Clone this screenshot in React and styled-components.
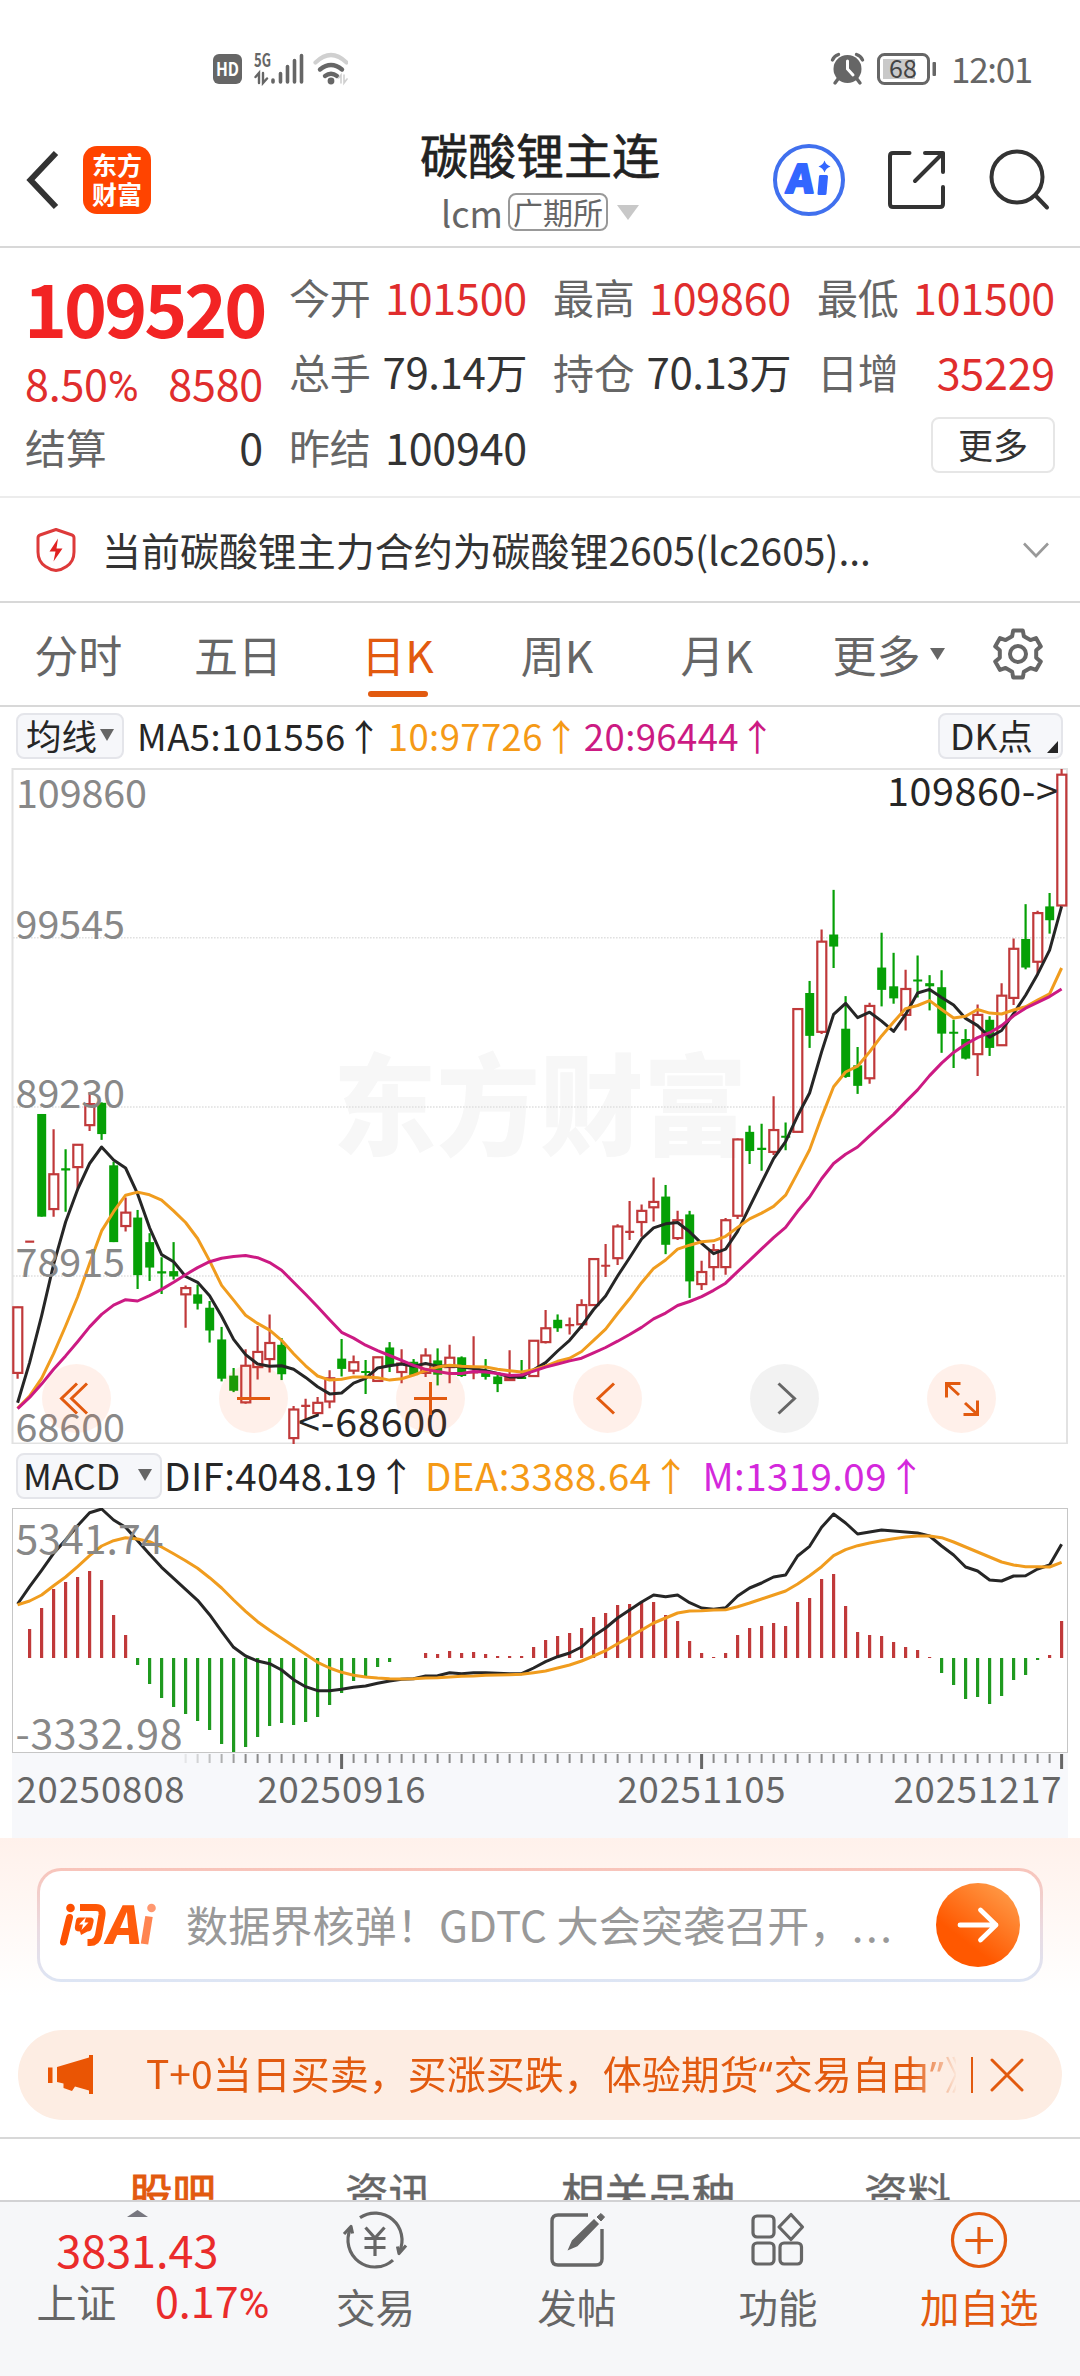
import React from "react";
import styled, { createGlobalStyle } from "styled-components";

const FONT = '"Noto Sans CJK SC", "Noto Sans", sans-serif';
const C = {
  ink: "#262626",
  text: "#333333",
  mute: "#666666",
  faint: "#888888",
  red: "#e02d2d",
  orange: "#e25a0f",
  up: "#c0393a",
  down: "#06a006",
  ma10: "#f59a16",
  ma20: "#cc1a83",
  macd: "#d428dc",
};

const Global = createGlobalStyle`
  * { box-sizing: border-box; }
  body { margin: 0; background: #fff; font-family: ${FONT}; color: ${C.text}; }
  svg { display: block; flex: none; }
`;

const Screen = styled.div`
  width: 1080px;
  height: 2376px;
  display: flex;
  flex-direction: column;
  overflow: hidden;
  background: #fff;
`;

/* ---------- status bar ---------- */
const StatusBar = styled.div`
  height: 113px;
  padding: 46px 50px 0 212px;
  display: flex;
  align-items: flex-start;
  justify-content: space-between;
`;
const StatusGroup = styled.div`
  display: flex;
  align-items: center;
  height: 46px;
`;
const Clock = styled.span`
  margin-left: 13px;
  font-size: 35px;
  line-height: 46px;
  padding-bottom: 3px;
  letter-spacing: -1.3px;
  color: ${C.mute};
  width: 79px;
  white-space: nowrap;
`;

/* ---------- header ---------- */
const Header = styled.header`
  height: 135px;
  border-bottom: 2px solid #d8d8d8;
  display: grid;
  grid-template-columns: 340px 1fr 340px;
  align-items: center;
`;
const HeaderSide = styled.div`
  display: flex;
  align-items: center;
  gap: ${(p) => p.$gap}px;
  padding-left: ${(p) => p.$pad}px;
`;
const Logo = styled.div`
  width: 68px;
  height: 68px;
  border-radius: 14px;
  background: #ff4400;
  color: #fff;
  font-size: 25px;
  font-weight: 700;
  line-height: 29px;
  text-align: center;
  padding-top: 4px;
`;
const TitleBlock = styled.div`
  display: flex;
  flex-direction: column;
  align-items: center;
  height: 133px;
  padding-top: 12px;
`;
const Title = styled.div`
  font-size: 48px;
  line-height: 56px;
  -webkit-text-stroke: 0.6px #222;
  color: #222;
`;
const SubTitle = styled.div`
  display: flex;
  align-items: center;
  height: 40px;
  margin-top: 11px;
  font-size: 36px;
  color: ${C.mute};
  line-height: 40px;
`;
const Exchange = styled.span`
  height: 38px;
  margin: 0 9px 0 5px;
  padding: 0 3px;
  border: 2px solid #999;
  border-radius: 8px;
  font-size: 30px;
  line-height: 33px;
`;

/* ---------- quote ---------- */
const Quote = styled.section`
  height: 250px;
  padding: 10px 24px 0 25px;
  border-bottom: 2px solid #ececec;
  display: grid;
  grid-template-columns: repeat(4, 238px);
  column-gap: 26px;
  align-items: start;
`;
const QuoteColumn = styled.div`
  display: flex;
  flex-direction: column;
`;
const LastPrice = styled.div`
  height: 97px;
  line-height: 97px;
  font-size: 73px;
  font-weight: 700;
  letter-spacing: -3px;
  margin-left: -1px;
  color: #f22424;
  white-space: nowrap;
`;
const Cell = styled.div`
  height: ${(p) => p.$h || 75}px;
  display: flex;
  align-items: center;
  justify-content: space-between;
  font-size: 43px;
  letter-spacing: -0.2px;
  white-space: nowrap;
  color: ${(p) => (p.$up ? C.red : C.text)};
`;
const Percent = styled.span`
  font-family: Roboto, sans-serif;
  font-size: 0.98em;
  line-height: 1;
`;
const Label = styled.span`
  font-size: 41px;
  color: ${C.mute};
`;
const Volume = styled.span`
  font-size: 42px;
  letter-spacing: -0.4px;
`;
const MoreButton = styled.button`
  align-self: flex-end;
  margin-top: 9px;
  width: 124px;
  height: 56px;
  padding: 0 0 3px;
  border: 2px solid #e6e6e6;
  border-radius: 8px;
  background: #fff;
  font-family: ${FONT};
  font-size: 35px;
  line-height: 48px;
  color: ${C.text};
`;

/* ---------- notice ---------- */
const Notice = styled.section`
  height: 105px;
  padding: 0 30px 0 35px;
  border-bottom: 2px solid #d8d8d8;
  display: flex;
  align-items: center;
`;
const NoticeText = styled.div`
  flex: 1;
  margin-left: 25px;
  padding-bottom: 2px;
  font-size: 39px;
  letter-spacing: -0.04px;
  line-height: 60px;
`;

/* ---------- period tabs ---------- */
const Periods = styled.nav`
  height: 104px;
  border-bottom: 2px solid #d8d8d8;
  display: flex;
  align-items: center;
`;
const Period = styled.div`
  width: ${(p) => p.$w || 159.6}px;
  height: 102px;
  padding-right: ${(p) => (p.$w ? 0 : 3)}px;
  display: flex;
  align-items: center;
  justify-content: center;
  gap: 10px;
  position: relative;
  font-size: 44px;
  line-height: 102px;
  white-space: nowrap;
  color: ${(p) => (p.$on ? C.orange : C.mute)};
  &::after {
    content: "";
    display: ${(p) => (p.$on ? "block" : "none")};
    position: absolute;
    left: 49px;
    bottom: 8px;
    width: 60px;
    height: 6px;
    border-radius: 3px;
    background: ${C.orange};
  }
`;

/* ---------- indicator rows ---------- */
const IndicatorRow = styled.div`
  height: ${(p) => p.$h}px;
  padding: ${(p) => p.$top}px 17px 0 16px;
  display: flex;
  align-items: flex-start;
`;
const Picker = styled.div`
  width: ${(p) => p.$w}px;
  height: 46px;
  border: 2px solid #e4e5ea;
  border-radius: 8px;
  background: #f6f7fa;
  display: flex;
  align-items: center;
  justify-content: space-between;
  padding: 0 8px 2px ${(p) => p.$pl || 8}px;
  font-size: 35.5px;
  line-height: 42px;
  color: ${C.ink};
  white-space: nowrap;
`;
const Reading = styled.span`
  margin-left: ${(p) => p.$ml}px;
  font-size: ${(p) => p.$size}px;
  letter-spacing: ${(p) => p.$ls || 0}px;
  line-height: ${(p) => p.$lh || 44}px;
  white-space: pre;
  color: ${(p) => p.$color};
`;
const Spacer = styled.div`
  flex: 1;
`;
const Corner = styled.i`
  align-self: flex-end;
  width: 11px;
  height: 12px;
  margin: 0 -5px 2px 0;
  background: ${C.ink};
  clip-path: polygon(100% 0, 100% 100%, 0 100%);
`;

/* ---------- charts ---------- */
const ChartWrap = styled.div`
  position: relative;
  height: ${(p) => p.$h}px;
`;
const ChartControls = styled.div`
  position: absolute;
  left: 42px;
  bottom: 11px;
  display: flex;
  gap: 108px;
`;
const RoundControl = styled.div`
  width: 69px;
  height: 69px;
  border-radius: 50%;
  background: ${(p) => (p.$off ? "rgba(110,110,110,.09)" : "rgba(255,100,30,.095)")};
`;

/* ---------- AI prompt ---------- */
const AskSection = styled.section`
  height: 172px;
  padding: 30px 37px 0;
  background: linear-gradient(#fff1eb, #fff 92%);
`;
const AskBox = styled.div`
  height: 114px;
  border: 3px solid transparent;
  border-radius: 24px;
  background: linear-gradient(#fff, #fff) padding-box,
    linear-gradient(#f8c4ba, #eadbe2 55%, #dde5f4) border-box;
  display: flex;
  align-items: center;
  padding: 0 20px 0 18px;
`;
const AskText = styled.div`
  flex: 1;
  margin-left: 30px;
  font-size: 42px;
  letter-spacing: 0.15px;
  line-height: 60px;
  padding-bottom: 3px;
  color: #999;
  white-space: pre;
`;
const Dots = styled.span`
  letter-spacing: 2.6px;
`;

/* ---------- ticker ---------- */
const Ticker = styled.section`
  margin: 20px 18px 17px;
  height: 90px;
  border-radius: 45px;
  background: #fdede3;
  display: flex;
  align-items: center;
  padding: 0 38px 0 30px;
  color: ${C.orange};
`;
const TickerText = styled.div`
  width: 812px;
  margin-left: 52px;
  font-size: 39px;
  line-height: 60px;
  padding-bottom: 4px;
  white-space: nowrap;
  overflow: hidden;
  mask-image: linear-gradient(90deg, #000 765px, rgba(0, 0, 0, 0.3) 800px, transparent 812px);
`;
const Curly = styled.span`
  font-family: "Noto Sans", sans-serif;
  letter-spacing: 1px;
`;
const Bar = styled.i`
  width: 2px;
  height: 36px;
  margin: 0 17px 0 15px;
  background: ${C.orange};
`;

/* ---------- section tabs ---------- */
const Sections = styled.nav`
  height: 63px;
  border-top: 2px solid #d8d8d8;
  padding-top: 28px;
  display: flex;
  justify-content: space-evenly;
  align-items: flex-start;
  overflow: hidden;
`;
const SectionTab = styled.div`
  font-size: 43.5px;
  -webkit-text-stroke: ${(p) => (p.$on ? 1 : 0.4)}px currentColor;
  line-height: 50px;
  color: ${(p) => (p.$on ? C.orange : C.mute)};
`;

/* ---------- bottom bar ---------- */
const BottomBar = styled.footer`
  height: 176px;
  border-top: 2px solid #d2d2d4;
  background: #f6f7f9;
  display: flex;
`;
const IndexBlock = styled.div`
  width: 275px;
  padding-top: 8px;
  display: flex;
  flex-direction: column;
  align-items: center;
`;
const IndexValue = styled.div`
  margin-top: 5px;
  font-size: 45px;
  line-height: 54px;
  color: #ea2b2b;
`;
const IndexRow = styled.div`
  width: 233px;
  margin-left: 31px;
  display: flex;
  justify-content: space-between;
  align-items: center;
  font-size: 43px;
  line-height: 46px;
  color: #ea2b2b;
`;
const IndexName = styled.span`
  font-size: 40px;
  letter-spacing: 0;
  color: ${C.mute};
`;
const NavItem = styled.div`
  width: 201.5px;
  padding-top: 8px;
  display: flex;
  flex-direction: column;
  align-items: center;
  font-size: 39.5px;
  line-height: 72px;
  color: ${(p) => (p.$accent ? C.orange : C.mute)};
`;

/* ---------- small drawings ---------- */
const Triangle = ({ w, h, color, flip }) => (
  <svg width={w} height={h} viewBox="0 0 10 10" preserveAspectRatio="none">
    <path d={flip ? "M0 10L5 0L10 10Z" : "M0 0H10L5 10Z"} fill={color} />
  </svg>
);

const SignalIcons = () => (
  <svg width="136" height="34" viewBox="212 52 136 34">
    <rect x="213" y="54" width="29" height="30" rx="6" fill={C.mute} />
    <text x="227.5" y="76" fontSize="18" fontWeight="700" textAnchor="middle" textLength="23" lengthAdjust="spacingAndGlyphs" fill="#fff" fontFamily={FONT}>HD</text>
    <text x="254" y="67" fontSize="18.5" fontWeight="700" textLength="17" lengthAdjust="spacingAndGlyphs" fill={C.mute} fontFamily={FONT}>5G</text>
    <g stroke={C.mute} fill="none" strokeLinecap="round">
      <path d="M259 83V73L255.500 77M263 73V83L267 78.500" strokeWidth="2.400" />
      <path d="M273 82V80M280.500 82V73.500M287.500 82V66.500M294.500 82V60.500M301.500 82V55.500" strokeWidth="3.600" />
      <path d="M320 69.500Q331 60.500 342 69.500" strokeWidth="4.400" />
      <path d="M325 76Q331 71.500 337 76" strokeWidth="4.400" />
      <path d="M315.500 62.500Q331 47.500 346.500 62.500" strokeWidth="4.200" stroke="#d0d0d0" />
      <path d="M341 83V75L338.500 78M344 75V83L347 79" strokeWidth="1.600" stroke="#d0d0d0" />
    </g>
    <circle cx="331" cy="81" r="3.400" fill={C.mute} />
  </svg>
);

const AlarmBattery = () => (
  <svg width="108" height="34" viewBox="830 52 108 34">
    <circle cx="847.500" cy="69" r="14" fill={C.mute} />
    <g stroke={C.mute} strokeWidth="3.400" strokeLinecap="round" fill="none">
      <path d="M832.500 60Q834 56 838.500 54.500M862.500 60Q861 56 856.500 54.500M838 79L835 83M857 79L860 83" />
      <path d="M847.500 61V69L853 75" stroke="#fff" strokeWidth="3" />
    </g>
    <rect x="878.500" y="54.500" width="50" height="29" rx="6" fill="none" stroke={C.mute} strokeWidth="3" />
    <rect x="883" y="59" width="32" height="20" fill="#c9c9c9" />
    <rect x="932.500" y="62" width="3.500" height="14" rx="1" fill={C.mute} />
    <text x="903" y="78" fontSize="25" textAnchor="middle" fill="#444" fontFamily={FONT}>68</text>
  </svg>
);

const BackIcon = () => (
  <svg width="34" height="60" viewBox="0 0 34 60" fill="none" stroke={C.text} strokeWidth="6">
    <path d="M31 3L5.500 30L31 57" />
  </svg>
);

const AiBadge = () => (
  <svg width="74" height="74" viewBox="0 0 74 74">
    <circle cx="37" cy="37" r="34" fill="none" stroke="#4070ee" strokeWidth="4" />
    <text x="0" y="0" transform="translate(13.500 50) skewX(-6)" fontSize="39" fontWeight="900" textLength="27" lengthAdjust="spacingAndGlyphs" fill="#3366ff" stroke="#3366ff" strokeWidth="1.800" strokeLinejoin="round" fontFamily={FONT}>A</text>
    <path d="M48.500 33.500H54.500L53 50.500H47Z" fill="#3366ff" stroke="#3366ff" strokeWidth="3" strokeLinejoin="round" />
    <path d="M52.500 17.500Q54 22 58.500 23.500Q54 25 52.500 29.500Q51 25 46.500 23.500Q51 22 52.500 17.500Z" fill="#3366ff" />
  </svg>
);

const ShareIcon = () => (
  <svg width="60" height="60" viewBox="0 0 60 60" fill="none" stroke={C.text} strokeWidth="4" strokeLinecap="round" strokeLinejoin="round">
    <path d="M22.500 3H6Q3 3 3 6V54Q3 57 6 57H53Q56 57 56 54V37M38 3H56V22M28 31L56 3" />
  </svg>
);

const SearchIcon = () => (
  <svg width="62" height="64" viewBox="0 0 62 64" fill="none" stroke={C.text} strokeWidth="4" strokeLinecap="round">
    <circle cx="29" cy="29" r="25.500" />
    <path d="M47.500 47.500L59 59.500" />
  </svg>
);

const ShieldIcon = () => (
  <svg width="42" height="46" viewBox="0 0 42 46">
    <path d="M21 2.500L37 8Q39 8.700 39 11V25Q39 34.500 31.500 39.500Q26.500 43 21 43.500Q15.500 43 10.500 39.500Q3 34.500 3 25V11Q3 8.700 5 8Z" fill="none" stroke="#dd3a3a" strokeWidth="3" strokeLinejoin="round" />
    <path d="M23 11.500L14.500 24.500H20.500L18.500 34.500L27.500 21.500H21.500Z" fill="#e02222" />
  </svg>
);

const GearIcon = () => {
  const pts = [];
  for (let i = 0; i < 6; i++) {
    const a = (i * 60 - 90) * (Math.PI / 180);
    [[-0.2, 24], [0.2, 24], [0.32, 18.6], [0.727, 18.6]].forEach(([d, r]) =>
      pts.push(`${(26 + r * Math.cos(a + d)).toFixed(1)},${(26 + r * Math.sin(a + d)).toFixed(1)}`)
    );
  }
  return (
    <svg width="52" height="52" viewBox="0 0 52 52" fill="none" stroke={C.mute} strokeWidth="4" strokeLinejoin="round">
      <polygon points={pts.join(" ")} />
      <circle cx="26" cy="26" r="8" />
    </svg>
  );
};

const AskLogo = () => (
  <svg width="98" height="46" viewBox="58 1902 98 46">
    <defs>
      <linearGradient id="ask" gradientUnits="userSpaceOnUse" x1="60" y1="1946" x2="156" y2="1904">
        <stop offset="0" stopColor="#fd4f00" />
        <stop offset="0.6" stopColor="#ff5a08" />
        <stop offset="1" stopColor="#ffa27a" />
      </linearGradient>
    </defs>
    <g fill="none" stroke="url(#ask)" strokeWidth="7" strokeLinecap="round">
      <path d="M69.500 1917.500L63.500 1942" />
      <path d="M80 1907.500H96Q103 1907.500 102 1915L98.500 1935Q97 1942.500 90 1942.500H87.500" strokeLinecap="butt" />
    </g>
    <circle cx="70.500" cy="1908" r="4.300" fill="#fd4f00" />
    <circle cx="151.500" cy="1908" r="4.300" fill="#ff9870" />
    <path d="M79 1917.500H90Q94.500 1917.500 93.500 1922L92 1928Q91 1931.500 87.500 1931.500L81 1935L80 1931.500Q73.500 1931.500 75 1926L76 1920.500Q76.500 1917.500 79 1917.500Z" fill="url(#ask)" />
    <path d="M86 1917L79 1924.500H83L81.500 1930L88.500 1922.500H84.500Z" fill="#fff" />
    <text x="0" y="0" transform="translate(104 1944) skewX(-10)" fontSize="52" fontWeight="900" textLength="35" lengthAdjust="spacingAndGlyphs" fill="#ff5c0c" fontFamily={FONT}>A</text>
    <path d="M149 1916.500L144.500 1944" stroke="#ff8450" strokeWidth="7.500" />
  </svg>
);

const SendIcon = () => (
  <svg width="84" height="84" viewBox="0 0 84 84">
    <defs>
      <linearGradient id="send" x1="0.85" y1="0.05" x2="0.35" y2="0.7">
        <stop offset="0" stopColor="#ff9b48" />
        <stop offset="1" stopColor="#ff5800" />
      </linearGradient>
    </defs>
    <circle cx="42" cy="42" r="42" fill="url(#send)" />
    <path d="M24 42H60M44.500 27L60 42L44.500 57" fill="none" stroke="#fff" strokeWidth="4.800" strokeLinecap="round" strokeLinejoin="round" />
  </svg>
);

const HornIcon = () => (
  <svg width="46" height="40" viewBox="0 0 46 40" fill="#ea5504">
    <path d="M0 12.500H4.500V28H0ZM9 12L41 2.500V0H45V39H41V35.500L27 31.500L24 36L15.500 33V28.500L9 27Z" />
  </svg>
);

const CloseIcon = () => (
  <svg width="34" height="34" viewBox="0 0 34 34" stroke={C.orange} strokeWidth="3" strokeLinecap="round">
    <path d="M2 2L32 32M32 2L2 32" />
  </svg>
);

const TradeIcon = () => (
  <svg width="66" height="60" viewBox="0 0 66 60" fill="none" stroke={C.mute} strokeWidth="3.200" strokeLinecap="butt">
    <path d="M18 7.600A27 27 0 0 1 57.500 41.400M51 50.100A27 27 0 0 1 8.500 18.600" />
    <path d="M64 35.500L57 43.500L55.500 36.500M2 24L9 16.500L10.500 23.500" strokeLinejoin="round" />
    <path d="M23.500 17.500L33 28L42.500 17.500M33 28V46M22.500 28.500H43.500M22.500 37.500H43.500" />
  </svg>
);

const PostIcon = () => (
  <svg width="60" height="60" viewBox="0 0 60 60" fill="none" stroke={C.mute} strokeWidth="3.400">
    <path d="M41 5H11Q5 5 5 11V49Q5 55 11 55H49Q55 55 55 49V19" />
    <path d="M22 39L25.500 31L47 10L51 14L30 35.500Z" fill={C.mute} strokeWidth="1.500" />
    <path d="M50 7L54 3.500L57.500 7L54 11Z" fill={C.mute} strokeWidth="1" />
  </svg>
);

const GridIcon = () => (
  <svg width="60" height="60" viewBox="0 0 60 60" fill="none" stroke={C.mute} strokeWidth="3.200" strokeLinejoin="round">
    <rect x="5" y="6" width="21" height="21" rx="4" />
    <rect x="5" y="33" width="21" height="21" rx="4" />
    <rect x="32" y="33" width="21.500" height="21" rx="4" />
    <path d="M43 4.500L54.500 17L43 29.500L31 17Z" />
  </svg>
);

const AddIcon = () => (
  <svg width="60" height="60" viewBox="0 0 60 60" fill="none" stroke={C.orange} strokeWidth="3.200">
    <circle cx="30" cy="30" r="26.500" />
    <path d="M16.500 30.500H44M30 17V44" />
  </svg>
);

/* ---------- candlestick data ---------- */
// [kind, high, bodyTop, bodyBottom, low]; kinds: r hollow, g solid, R / G cross
const K = [
  ["r",1225,1226,1373,1386],["R",1079,1079,1079,1079],["g",793,793,1023,1023],["r",827,928,1006,1023],["G",872,917,917,1012],
  ["r",861,862,912,960],["r",745,771,818,831],["g",767,768,838,851],["g",900,908,1080,1080],["r",980,1014,1044,1056],
  ["g",1008,1025,1154,1185],["g",1060,1080,1137,1167],["G",1114,1148,1148,1196],["g",1080,1145,1157,1164],["r",1177,1183,1197,1272],
  ["g",1175,1197,1218,1231],["g",1212,1227,1278,1305],["g",1270,1298,1386,1392],["g",1362,1379,1413,1416],["r",1320,1357,1439,1442],
  ["r",1268,1326,1360,1388],["r",1242,1306,1342,1372],["g",1295,1310,1376,1389],["r",1447,1455,1519,1533],["R",1431,1447,1447,1478],
  ["r",1427,1440,1463,1470],["r",1367,1385,1437,1452],["g",1297,1341,1364,1381],["r",1334,1349,1368,1376],["G",1344,1371,1371,1420],
  ["r",1337,1338,1391,1392],["g",1304,1316,1356,1371],["r",1320,1352,1371,1396],["g",1342,1348,1378,1380],["r",1318,1334,1373,1382],
  ["g",1318,1345,1377,1401],["r",1310,1339,1360,1396],["g",1336,1338,1380,1382],["R",1291,1372,1372,1387],["g",1342,1370,1382,1388],
  ["g",1376,1381,1398,1416],["r",1322,1384,1389,1391],["G",1344,1384,1384,1386],["r",1300,1301,1380,1381],["r",1232,1273,1304,1307],
  ["g",1242,1254,1273,1281],["R",1249,1266,1266,1287],["r",1208,1221,1264,1274],["r",1117,1118,1221,1222],["R",1084,1133,1133,1158],
  ["r",1040,1045,1116,1131],["R",988,1057,1057,1075],["r",996,1010,1035,1068],["r",935,990,1002,1034],["g",952,978,1086,1107],
  ["r",1010,1031,1071,1075],["g",1010,1018,1168,1205],["r",1122,1147,1174,1187],["r",1084,1098,1136,1166],["r",1026,1031,1136,1153],
  ["r",848,850,1021,1028],["g",819,833,876,905],["G",815,871,871,920],["r",753,829,878,885],["G",812,844,844,874],
  ["r",557,558,833,834],["g",495,522,618,645],["r",380,407,609,614],["g",291,391,418,466],["g",529,602,710,712],
  ["g",643,684,730,748],["r",544,551,713,725],["g",387,465,515,552],["g",432,507,534,546],["r",470,513,571,606],
  ["G",438,494,494,532],["g",482,500,507,561],["g",471,509,613,656],["G",582,611,611,690],["g",603,625,669,671],
  ["r",548,571,659,708],["g",574,582,645,663],["r",500,528,639,640],["r",400,423,533,549],["g",323,401,465,469],
  ["r",338,343,452,480],["g",298,328,359,389],["r",20,33,326,327],
];
const MA5 = [1440,1350,1245,1130,1035,962,904,867,896,914,972,1048,1108,1124,1157,1170,1200,1246,1298,1332,1353,1358,1357,1365,1383,1404,1420,1418,1396,1385,1362,1357,1353,1358,1352,1358,1357,1360,1363,1368,1374,1382,1382,1366,1350,1324,1300,1268,1231,1201,1156,1115,1073,1048,1039,1036,1057,1083,1106,1096,1056,1001,947,893,855,797,746,654,570,545,577,565,585,608,570,522,514,532,549,579,595,621,606,568,527,480,426,328];
const MA10 = [1452,1425,1385,1330,1268,1203,1128,1055,1012,975,968,974,986,1010,1036,1072,1122,1177,1210,1244,1262,1277,1300,1330,1357,1380,1389,1387,1382,1382,1384,1389,1386,1378,1368,1360,1356,1358,1359,1360,1365,1368,1371,1366,1358,1347,1340,1325,1300,1275,1240,1207,1171,1139,1120,1096,1087,1079,1077,1067,1047,1028,1015,1000,975,925,873,800,732,699,686,654,618,587,557,550,539,559,578,574,559,567,569,560,553,538,524,466];
const MA20 = [1453,1428,1398,1365,1335,1303,1270,1242,1221,1209,1212,1200,1186,1170,1153,1137,1124,1116,1112,1110,1115,1126,1143,1170,1197,1225,1254,1282,1295,1311,1323,1334,1345,1356,1365,1370,1374,1374,1370,1371,1374,1379,1378,1369,1360,1353,1346,1340,1328,1316,1302,1287,1271,1252,1239,1222,1213,1202,1188,1172,1146,1121,1095,1070,1047,1011,979,938,904,883,867,842,818,794,766,739,707,679,655,637,622,611,595,573,556,543,530,513];

const HIST = [654,567,504,447,426,411,393,420,525,585,675,732,774,801,822,843,870,912,936,921,891,858,849,855,846,831,795,759,723,708,681,666,654,654,639,642,633,639,636,642,648,648,648,621,600,588,579,564,531,519,495,492,486,486,525,543,603,639,651,639,585,564,558,549,558,486,474,417,402,498,576,585,588,606,621,630,651,699,735,777,771,792,768,720,705,660,645,543];
const DIF = [492,440,391,340,300,257,218,207,240,262,302,343,382,415,448,481,524,574,622,648,663,671,690,719,740,752,752,748,742,738,730,723,718,716,708,707,698,701,698,698,700,701,701,684,665,650,639,621,588,564,534,510,486,465,470,465,488,504,508,503,468,444,429,411,405,348,319,262,222,249,282,276,270,273,276,279,288,318,345,381,393,420,423,408,407,387,375,313];
const DEA = [494,483,465,437,411,380,347,318,302,293,297,305,321,341,362,385,413,444,480,514,545,571,595,619,643,667,684,697,706,711,714,716,717,716,714,713,711,709,708,706,705,704,703,698,693,684,675,663,648,632,611,591,570,549,534,519,513,512,510,509,500,489,477,465,453,432,407,380,347,329,317,309,302,296,291,288,288,293,306,321,336,351,366,375,380,380,381,367];

const cx = (i) => 17.6 + i * 12;
const py = (v) => (v - 18) / 2.24;
const my = (v) => (v - 204) / 3;
const line = (arr, f) => arr.map((v, i) => `${cx(i).toFixed(1)},${f(v).toFixed(1)}`).join(" ");

const Candle = ({ i, d }) => {
  const [kind, hi, top, bot, lo] = d;
  const x = cx(i);
  const color = kind === "r" || kind === "R" ? C.up : C.down;
  if (kind === "g")
    return (
      <g fill={color}>
        <rect x={x - 1.1} y={py(hi)} width="2.200" height={py(lo) - py(hi)} />
        <rect x={x - 4.4} y={py(top)} width="9" height={py(bot) - py(top)} />
      </g>
    );
  if (kind === "r")
    return (
      <g stroke={color} strokeWidth="2.200" fill="none">
        <path d={`M${x} ${py(hi)}V${py(top)}M${x} ${py(bot)}V${py(lo)}`} />
        <rect x={x - 4.3} y={py(top)} width="9" height={py(bot) - py(top)} />
      </g>
    );
  return (
    <path d={`M${x} ${py(hi)}V${py(lo)}M${x - 4.4} ${py(top)}H${x + 4.6}`} stroke={color} strokeWidth="2.200" />
  );
};

const AxisLabel = ({ x, y, w, children, color = C.faint, size = 39.5 }) => (
  <text x={x} y={y} textLength={w} fontSize={size} fill={color} fontFamily={FONT}>{children}</text>
);

const PriceChart = () => (
  <svg width="1080" height="676" viewBox="0 0 1080 676">
    <text x="333" y="379" fontSize="110" fontWeight="900" textLength="414" lengthAdjust="spacingAndGlyphs" fill="#f7f7f7" fontFamily={FONT}>东方财富</text>
    <rect x="12.500" y="1" width="1054.500" height="674.500" fill="none" stroke="#e2e2e2" strokeWidth="2" />
    {[169.7, 338.9, 508].map((y) => (
      <line key={y} x1="13" x2="1066" y1={y} y2={y} stroke="#e0e0e0" strokeWidth="1.500" strokeDasharray="1.6 1.4" />
    ))}
    {K.map((d, i) => <Candle key={i} i={i} d={d} />)}
    <g fill="none" strokeWidth="3" strokeLinejoin="round">
      <polyline points={line(MA5, py)} stroke={C.ink} />
      <polyline points={line(MA10, py)} stroke="#f09c1e" />
      <polyline points={line(MA20, py)} stroke={C.ma20} />
    </g>
    <AxisLabel x="16" y="40" w="131">109860</AxisLabel>
    <AxisLabel x="15.500" y="171" w="109.500">99545</AxisLabel>
    <AxisLabel x="15.500" y="340" w="109.500">89230</AxisLabel>
    <AxisLabel x="15.500" y="509" w="109.500">78915</AxisLabel>
    <AxisLabel x="15.500" y="674" w="109.500">68600</AxisLabel>
    <AxisLabel x="298" y="669" w="150" color={C.ink}>{"<-68600"}</AxisLabel>
    <AxisLabel x="887" y="38" w="171" color={C.ink}>{"109860->"}</AxisLabel>
  </svg>
);

const controls = [
  ["M35 19.500L19.500 34.500L35 49.500M45 19.500L29.500 34.500L45 49.500"],
  ["M18 34.500H51"],
  ["M18 34.500H51M34.500 18V51"],
  ["M41 19.500L25 34.500L41 49.500"],
  ["M28.500 19.500L44.500 34.500L28.500 49.500", true],
  ["M33.500 19.500H19.500V33.500M19.500 19.500L32 31M36.500 50.500H50.500V36.500M50.500 50.500L38 39"],
];

const MacdChart = () => (
  <svg width="1080" height="245" viewBox="0 0 1080 245">
    <rect x="12.500" y="0.500" width="1055" height="244" fill="none" stroke="#c6c6c6" />
    {HIST.map((v, i) => {
      if (v === 654) return null;
      const up = v < 654;
      return (
        <rect key={i} x={cx(i) - 1.6} width="3.200" y={up ? my(v) : my(654)} height={Math.abs(my(v) - my(654))} fill={up ? C.up : "#1f9a1f"} />
      );
    })}
    <g fill="none" strokeWidth="3" strokeLinejoin="round">
      <polyline points={line(DIF, my)} stroke={C.ink} />
      <polyline points={line(DEA, my)} stroke="#f09c1e" />
    </g>
    <AxisLabel x="15.500" y="46" w="148" size="41">5341.74</AxisLabel>
    <AxisLabel x="15.500" y="241" w="167" size="41">-3332.98</AxisLabel>
  </svg>
);

const TimeAxis = () => (
  <svg width="1080" height="85" viewBox="0 0 1080 85">
    <rect x="12" y="0" width="1056" height="85" fill="#f7f8fb" />
    {Array.from({ length: 88 }, (_, i) => i).filter((i) => i >= 14).map((i) => {
      const major = i === 27 || i === 57 || i === 87;
      return (
        <rect key={i} x={cx(i) - (major ? 1.5 : 1)} y="1" width={major ? 3 : 2} height={major ? 15 : 9} fill={major ? C.mute : "#8a8a8a"} opacity={Math.min(1, (i - 13) / 6)} />
      );
    })}
    <AxisLabel x="16.500" y="49.500" w="168" size="36.500" color={C.mute}>20250808</AxisLabel>
    <AxisLabel x="257.500" y="49.500" w="168" size="36.500" color={C.mute}>20250916</AxisLabel>
    <AxisLabel x="617.500" y="49.500" w="168" size="36.500" color={C.mute}>20251105</AxisLabel>
    <AxisLabel x="893.500" y="49.500" w="168" size="36.500" color={C.mute}>20251217</AxisLabel>
  </svg>
);

export default function App() {
  return (
    <Screen>
      <Global />
      <StatusBar>
        <StatusGroup><SignalIcons /></StatusGroup>
        <StatusGroup><AlarmBattery /><Clock>12:01</Clock></StatusGroup>
      </StatusBar>

      <Header>
        <HeaderSide $pad={25} $gap={24}><BackIcon /><Logo>东方<br />财富</Logo></HeaderSide>
        <TitleBlock>
          <Title>碳酸锂主连</Title>
          <SubTitle>
            lcm<Exchange>广期所</Exchange>
            <Triangle w={22} h={15} color="#c8c8c8" />
          </SubTitle>
        </TitleBlock>
        <HeaderSide $pad={32} $gap={41}><AiBadge /><ShareIcon /><SearchIcon /></HeaderSide>
      </Header>

      <Quote>
        <QuoteColumn>
          <LastPrice>109520</LastPrice>
          <Cell $h={53} $up><span>8.50<Percent>%</Percent></span><span>8580</span></Cell>
          <Cell><Label>结算</Label>0</Cell>
        </QuoteColumn>
        <QuoteColumn>
          <Cell $up><Label>今开</Label>101500</Cell>
          <Cell><Label>总手</Label><Volume>79.14万</Volume></Cell>
          <Cell><Label>昨结</Label>100940</Cell>
        </QuoteColumn>
        <QuoteColumn>
          <Cell $up><Label>最高</Label>109860</Cell>
          <Cell><Label>持仓</Label><Volume>70.13万</Volume></Cell>
        </QuoteColumn>
        <QuoteColumn>
          <Cell $up><Label>最低</Label>101500</Cell>
          <Cell $up><Label>日增</Label>35229</Cell>
          <MoreButton>更多</MoreButton>
        </QuoteColumn>
      </Quote>

      <Notice>
        <ShieldIcon />
        <NoticeText>当前碳酸锂主力合约为碳酸锂2605(lc2605)...</NoticeText>
        <svg width="28" height="16" viewBox="0 0 28 16" fill="none" stroke="#999" strokeWidth="2.600"><path d="M2 1.500L14 14L26 1.500" /></svg>
      </Notice>

      <Periods>
        <Period>分时</Period>
        <Period>五日</Period>
        <Period $on>日K</Period>
        <Period>周K</Period>
        <Period>月K</Period>
        <Period $w={182}>更多<Triangle w={15} h={12} color={C.mute} /></Period>
        <Period $w={77}><GearIcon /></Period>
      </Periods>

      <IndicatorRow $h={61} $top={6}>
        <Picker $w={108}>均线<Triangle w={14} h={12} color={C.mute} /></Picker>
        <Reading $ml={13} $size={36.5} $ls={0.5} $lh={46} $color={C.ink}>MA5:101556↑</Reading>
        <Reading $ml={5} $size={36.5} $ls={0.4} $lh={46} $color={C.ma10}>10:97726↑</Reading>
        <Reading $ml={4} $size={36.5} $ls={0.4} $lh={46} $color={C.ma20}>20:96444↑</Reading>
        <Spacer />
        <Picker $w={125} $pl={10}>DK点<Corner /></Picker>
      </IndicatorRow>

      <ChartWrap $h={676}>
        <PriceChart />
        <ChartControls>
          {controls.map(([d, off], i) => (
            <RoundControl key={i} $off={off}>
              <svg width="69" height="69" viewBox="0 0 69 69" fill="none" stroke={off ? C.mute : C.orange} strokeWidth="3"><path d={d} /></svg>
            </RoundControl>
          ))}
        </ChartControls>
      </ChartWrap>

      <IndicatorRow $h={64} $top={9}>
        <Picker $w={146} $pl={5}>MACD<Triangle w={14} h={12} color={C.mute} /></Picker>
        <Reading $ml={2} $size={38.5} $ls={0.4} $lh={43} $color={C.ink}>DIF:4048.19↑</Reading>
        <Reading $ml={9} $size={38.5} $ls={0.4} $lh={43} $color={C.ma10}>DEA:3388.64↑</Reading>
        <Reading $ml={12} $size={38.5} $ls={0.4} $lh={43} $color={C.macd}>M:1319.09↑</Reading>
      </IndicatorRow>
      <ChartWrap $h={245}><MacdChart /></ChartWrap>
      <TimeAxis />

      <AskSection>
        <AskBox>
          <AskLogo />
          <AskText>数据界核弹！GDTC 大会突袭召开，<Dots>...</Dots></AskText>
          <SendIcon />
        </AskBox>
      </AskSection>

      <Ticker>
        <HornIcon />
        <TickerText>T+0当日买卖，买涨买跌，体验期货<Curly>“</Curly>交易自由<Curly>”</Curly>》</TickerText>
        <Bar />
        <CloseIcon />
      </Ticker>

      <Sections>
        <SectionTab $on>股吧</SectionTab>
        <SectionTab>资讯</SectionTab>
        <SectionTab>相关品种</SectionTab>
        <SectionTab>资料</SectionTab>
      </Sections>

      <BottomBar>
        <IndexBlock>
          <Triangle w={21} h={7} color="#77777f" flip />
          <IndexValue>3831.43</IndexValue>
          <IndexRow><IndexName>上证</IndexName><span>0.17<Percent>%</Percent></span></IndexRow>
        </IndexBlock>
        <NavItem><TradeIcon />交易</NavItem>
        <NavItem><PostIcon />发帖</NavItem>
        <NavItem><GridIcon />功能</NavItem>
        <NavItem $accent><AddIcon />加自选</NavItem>
      </BottomBar>
    </Screen>
  );
}
